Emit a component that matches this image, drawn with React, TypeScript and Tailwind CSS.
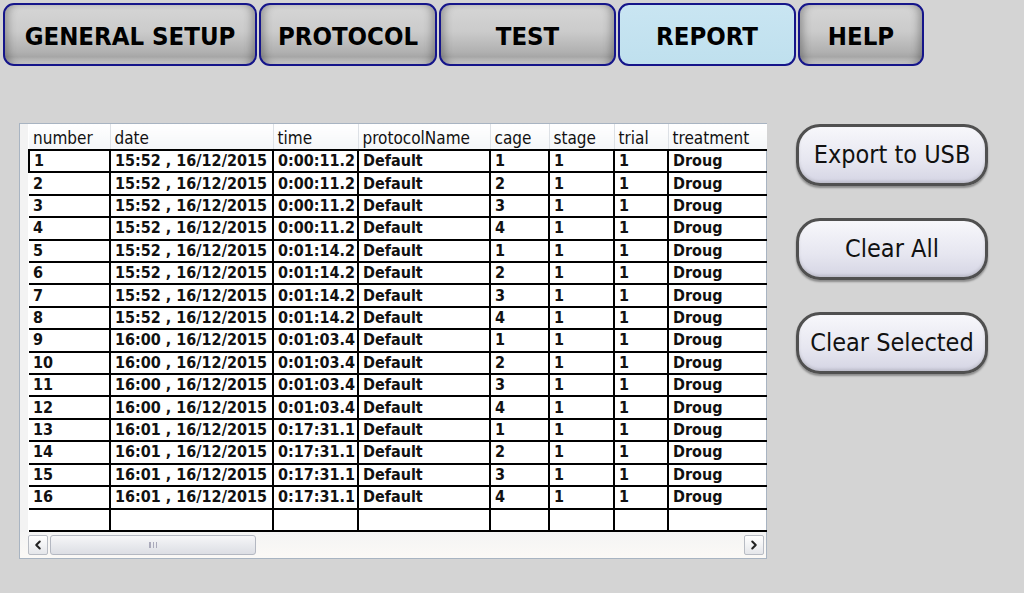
import { ChevronLeft, ChevronRight } from "lucide-react";

const tabs = [
  { label: "GENERAL SETUP", w: "w-[254px]" },
  { label: "PROTOCOL", w: "w-[178px]" },
  { label: "TEST", w: "w-[177px]" },
  { label: "REPORT", w: "w-[178px]", active: true },
  { label: "HELP", w: "w-[126px]" },
];

const columns = [
  { name: "number", w: "w-[81px]" },
  { name: "date", w: "w-[163px]" },
  { name: "time", w: "w-[85px]" },
  { name: "protocolName", w: "w-[132px]" },
  { name: "cage", w: "w-[59px]" },
  { name: "stage", w: "w-[65px]" },
  { name: "trial", w: "w-[54px]" },
  { name: "treatment", w: "w-[99px]" },
];

const sessions = [
  { date: "15:52 , 16/12/2015", time: "0:00:11.2" },
  { date: "15:52 , 16/12/2015", time: "0:01:14.2" },
  { date: "16:00 , 16/12/2015", time: "0:01:03.4" },
  { date: "16:01 , 16/12/2015", time: "0:17:31.1" },
];

const rows = sessions.flatMap((s, si) =>
  [1, 2, 3, 4].map((cage) => ({
    number: String(si * 4 + cage),
    date: s.date,
    time: s.time,
    protocolName: "Default",
    cage: String(cage),
    stage: "1",
    trial: "1",
    treatment: "Droug",
  }))
);

const font = "font-['DejaVu_Sans_Condensed','DejaVu_Sans',sans-serif]";

function Tab({ label, w, active }: { label: string; w: string; active?: boolean }) {
  return (
    <button
      className={`${w} h-[63px] rounded-[11px] border-2 border-[#15158a] pt-[3px] text-[25.5px] font-bold text-black ${
        active
          ? "bg-[linear-gradient(#c9e5f2,#bfe0ee)]"
          : "bg-[linear-gradient(#d6d6d6_0%,#cbcbcb_45%,#b0b0b0_80%,#a6a6a6_88%,#d2d2d2_100%)] shadow-[inset_7px_0_8px_-4px_rgba(0,0,0,0.3),inset_-7px_0_8px_-4px_rgba(0,0,0,0.3)]"
      }`}
    >
      {label}
    </button>
  );
}

function SideButton({ label }: { label: string }) {
  return (
    <button className="flex h-[62px] w-[192px] items-center justify-center rounded-[24px] border-[3px] border-[#505050] bg-[linear-gradient(#f7f7fb,#e6e6f0_60%,#d5d5e4)] text-[25px] text-[#111] shadow-[0_2px_2px_rgba(0,0,0,0.35),inset_0_-2px_3px_rgba(0,0,0,0.12)]">
      {label}
    </button>
  );
}

export default function App() {
  return (
    <div className={`${font} h-[593px] w-[1024px] overflow-hidden bg-[#d4d4d4]`}>
      <div className="flex gap-[2px] pl-[3px] pt-[3px]">
        {tabs.map((t) => (
          <Tab key={t.label} {...t} />
        ))}
      </div>

      <div className="mt-[57px] flex items-start">
        <div className="ml-[19px] h-[436px] w-[748px] border border-[#a8b4c2] bg-white">
          <div className="flex h-[408px] bg-white">
            <div className="w-[8px] shrink-0 bg-[#f3f3f3]" />
            <table className="w-[738px] table-fixed border-collapse">
              <thead>
                <tr className="h-[26px]">
                  {columns.map((c, i) => (
                    <th
                      key={c.name}
                      className={`${c.w} bg-[linear-gradient(#ffffff,#f4f6f8)] pl-[4px] pt-[2px] text-left text-[17px] leading-[20px] font-normal text-[#111] ${
                        i < columns.length - 1 ? "border-r border-[#dde1e6]" : ""
                      }`}
                    >
                      {c.name}
                    </th>
                  ))}
                </tr>
              </thead>
              <tbody>
                {rows.map((r, ri) => (
                  <tr key={r.number} className="h-[22.4px]">
                    {columns.map((c, i) => (
                      <td
                        key={c.name}
                        className={`overflow-hidden whitespace-nowrap border-t-2 border-black px-[4px] py-0 text-[16px] leading-[18px] font-bold text-[#111] ${
                          i < columns.length - 1 ? "border-r-2" : ""
                        } ${ri === 0 && i === 0 ? "border-l-2" : ""}`}
                      >
                        {r[c.name as keyof typeof r]}
                      </td>
                    ))}
                  </tr>
                ))}
                <tr className="h-[22.4px]">
                  {columns.map((c, i) => (
                    <td
                      key={c.name}
                      className={`border-y-2 border-black ${i < columns.length - 1 ? "border-r-2" : ""}`}
                    />
                  ))}
                </tr>
              </tbody>
            </table>
          </div>
          <div className="flex h-[26px] items-center bg-[linear-gradient(#f4f4f4,#fbf9f6)] pl-[8px] pr-[2px]">
            <div className="flex h-[20px] w-[20px] items-center justify-center rounded-[2px] border border-[#b8bcc4] bg-[linear-gradient(#ffffff,#e4e6ea)]">
              <ChevronLeft size={14} strokeWidth={3.5} className="text-[#222]" />
            </div>
            <div className="ml-[2px] flex h-[20px] w-[206px] items-center justify-center rounded-[3px] border border-[#b4b8c2] bg-[linear-gradient(#f6f6f8,#dcdee4)]">
              <span className="h-[6px] w-[8px] border-x border-[#aab] bg-[repeating-linear-gradient(90deg,#aab_0_1px,transparent_1px_3px)]" />
            </div>
            <div className="flex-1" />
            <div className="flex h-[20px] w-[20px] items-center justify-center rounded-[2px] border border-[#b8bcc4] bg-[linear-gradient(#ffffff,#e4e6ea)]">
              <ChevronRight size={14} strokeWidth={3.5} className="text-[#222]" />
            </div>
          </div>
        </div>

        <div className="ml-[29px] mt-[1px] flex flex-col gap-[32px]">
          <SideButton label="Export to USB" />
          <SideButton label="Clear All" />
          <SideButton label="Clear Selected" />
        </div>
      </div>
    </div>
  );
}
